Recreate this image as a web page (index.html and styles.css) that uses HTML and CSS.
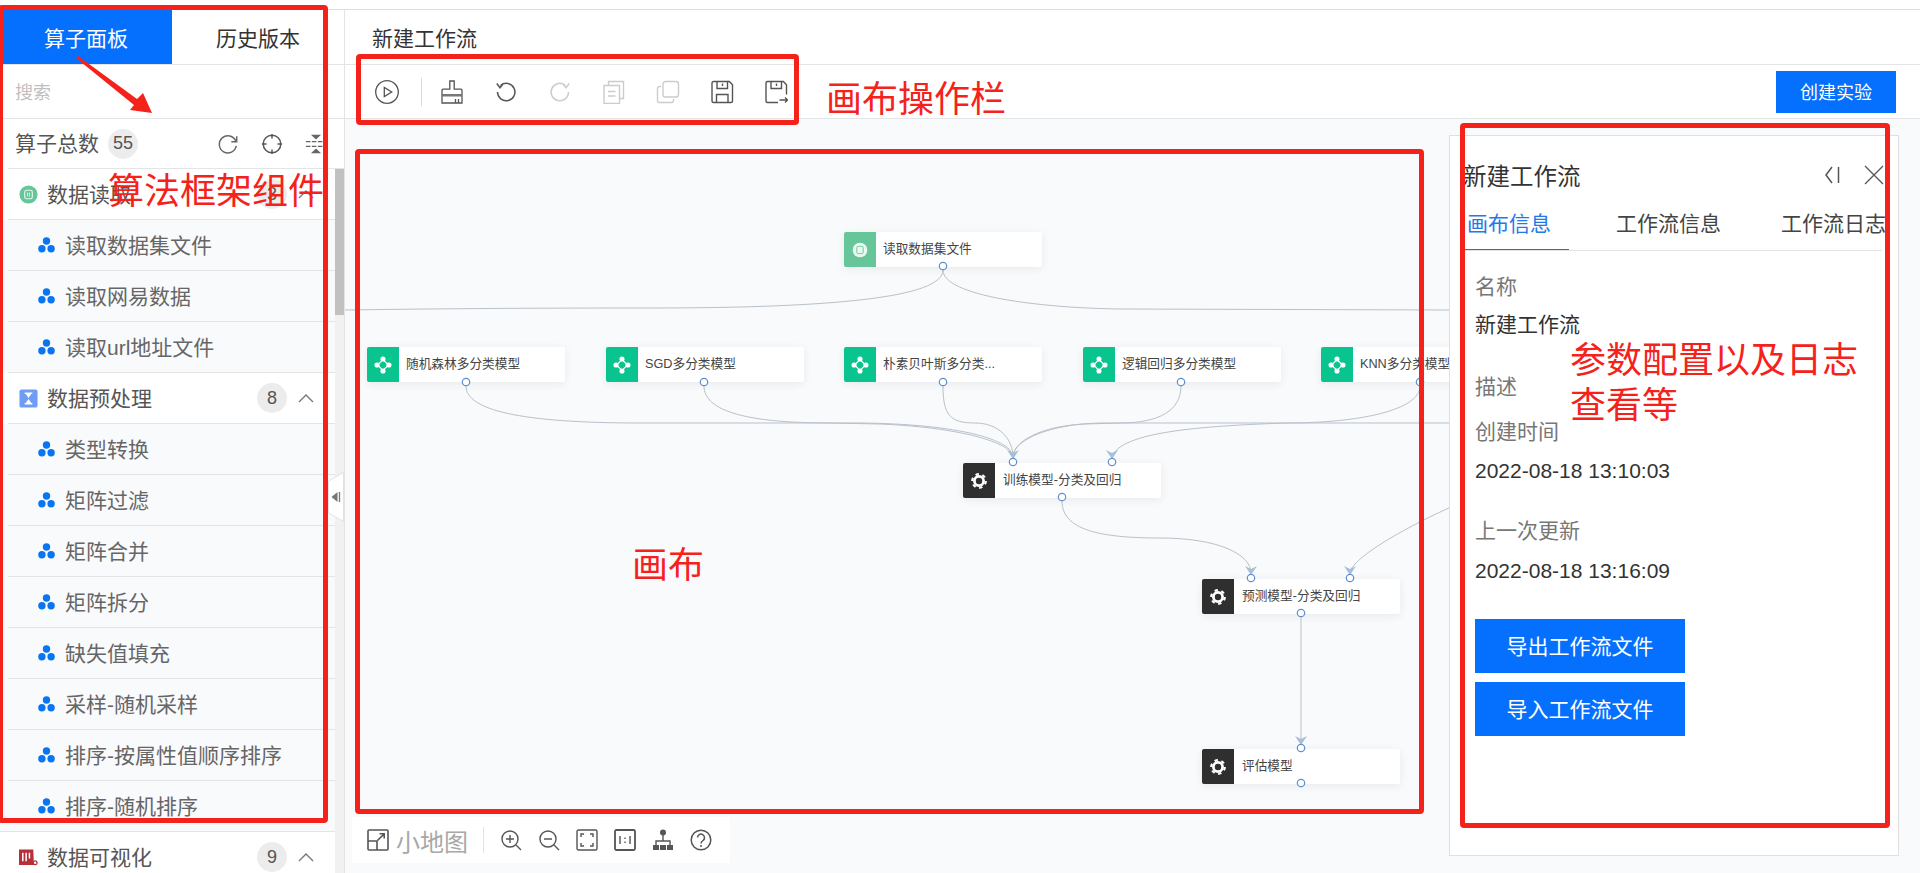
FILE: index.html
```html
<!DOCTYPE html>
<html lang="zh-CN">
<head>
<meta charset="utf-8">
<title>新建工作流</title>
<link rel="stylesheet" href="styles.css">
</head>
<body>
<svg class="defs" width="0" height="0" aria-hidden="true">
  <defs>
    <symbol id="tri" viewBox="0 0 17 16"><circle cx="8.5" cy="4" r="3.7"/><circle cx="3.9" cy="11.7" r="3.7"/><circle cx="13.1" cy="11.7" r="3.7"/></symbol>
    <symbol id="chev" viewBox="0 0 16 10"><path d="M1 9 8 2l7 7" fill="none" stroke="#777" stroke-width="1.4"/></symbol>
    <symbol id="gear" viewBox="0 0 24 24"><circle cx="12" cy="12" r="5" fill="none" stroke="#fff" stroke-width="3"/><circle cx="12" cy="12" r="7.4" fill="none" stroke="#fff" stroke-width="2.4" stroke-dasharray="3.7 4"/></symbol>
    <symbol id="model" viewBox="0 0 24 24"><path d="M12 6 18 12 12 18 6 12Z" fill="none" stroke="#fff" stroke-width="1.2"/><circle cx="12" cy="5.5" r="2.8" fill="#fff"/><circle cx="12" cy="18.5" r="2.8" fill="#fff"/><circle cx="5.5" cy="12" r="2.8" fill="#fff"/><circle cx="18.5" cy="12" r="2.8" fill="#fff"/></symbol>
  </defs>
</svg>
<div class="topline"></div>
<div class="app">
  <aside class="sidebar">
    <div class="side-tabs">
      <div class="side-tab active">算子面板</div>
      <div class="side-tab">历史版本</div>
    </div>
    <div class="search">搜索</div>
    <div class="count-row">
      <span class="count-label">算子总数</span>
      <span class="badge">55</span>
      <span class="count-tools">
        <svg class="tool" viewBox="0 0 24 24"><path d="M20.5 9A9.3 9.3 0 1 0 21 14" fill="none" stroke="#666" stroke-width="1.6"/><path d="M21.5 3.5V9.6H15.6" fill="none" stroke="#666" stroke-width="1.6"/></svg>
        <svg class="tool" viewBox="0 0 24 24"><circle cx="12" cy="12" r="9.6" fill="none" stroke="#555" stroke-width="1.6"/><path d="M12 1v5M12 18v5M1 12h5M18 12h5" stroke="#555" stroke-width="1.6"/></svg>
        <svg class="tool" viewBox="0 0 24 24"><path d="M1 9.5h22M1 14.5h22" stroke="#666" stroke-width="1.4" stroke-dasharray="5 1.500"/><path d="M6.500 2h11l-5.500 5ZM6.500 22h11l-5.500-5Z" fill="#666"/></svg>
      </span>
    </div>
    <div class="tree">
      <div class="tree-list">
        <div class="row group"><div class="row-in">
          <svg class="g-icon" viewBox="0 0 20 20"><circle cx="10" cy="10" r="9.5" fill="#66c699"/><rect x="6" y="5.5" width="8" height="9" rx="2" fill="none" stroke="#e8f7ef" stroke-width="1.2"/><path d="M9 8v4M11 8v4" stroke="#e8f7ef"/></svg>
          <span class="g-text">数据读取</span><span class="badge push">3</span>
          <svg class="chev" viewBox="0 0 16 10"><use href="#chev"/></svg>
        </div></div>
        <div class="row item"><div class="row-in"><svg class="i-icon"><use href="#tri"/></svg><span class="i-text">读取数据集文件</span></div></div>
        <div class="row item"><div class="row-in"><svg class="i-icon"><use href="#tri"/></svg><span class="i-text">读取网易数据</span></div></div>
        <div class="row item"><div class="row-in"><svg class="i-icon"><use href="#tri"/></svg><span class="i-text">读取url地址文件</span></div></div>
        <div class="row group"><div class="row-in">
          <svg class="g-icon" viewBox="0 0 20 20"><rect width="19" height="19" x=".5" y=".5" rx="2" fill="#6f9cf5"/><path d="M6 4.500h8M6 15.500h8" fill="none" stroke="#fff" stroke-width="1.500"/><path d="M7 5h6l-3 4.500ZM6.800 15h6.400L10 10.500Z" fill="#fff"/></svg>
          <span class="g-text">数据预处理</span><span class="badge push">8</span>
          <svg class="chev" viewBox="0 0 16 10"><use href="#chev"/></svg>
        </div></div>
        <div class="row item"><div class="row-in"><svg class="i-icon"><use href="#tri"/></svg><span class="i-text">类型转换</span></div></div>
        <div class="row item"><div class="row-in"><svg class="i-icon"><use href="#tri"/></svg><span class="i-text">矩阵过滤</span></div></div>
        <div class="row item"><div class="row-in"><svg class="i-icon"><use href="#tri"/></svg><span class="i-text">矩阵合并</span></div></div>
        <div class="row item"><div class="row-in"><svg class="i-icon"><use href="#tri"/></svg><span class="i-text">矩阵拆分</span></div></div>
        <div class="row item"><div class="row-in"><svg class="i-icon"><use href="#tri"/></svg><span class="i-text">缺失值填充</span></div></div>
        <div class="row item"><div class="row-in"><svg class="i-icon"><use href="#tri"/></svg><span class="i-text">采样-随机采样</span></div></div>
        <div class="row item"><div class="row-in"><svg class="i-icon"><use href="#tri"/></svg><span class="i-text">排序-按属性值顺序排序</span></div></div>
        <div class="row item"><div class="row-in"><svg class="i-icon"><use href="#tri"/></svg><span class="i-text">排序-随机排序</span></div></div>
        <div class="row group footer-group"><div class="row-in">
          <svg class="g-icon" viewBox="0 0 20 20"><path d="M0 1.500h15l.5 11.500a3.500 3.500 0 0 0 2 5H0Z" fill="#b5303a"/><path d="M4 5v9M7.500 5v9M11 5v6" stroke="#fff" stroke-width="1.600"/><circle cx="17" cy="15.500" r="2" fill="none" stroke="#b5303a" stroke-width="1.300"/></svg>
          <span class="g-text">数据可视化</span><span class="badge push">9</span>
          <svg class="chev" viewBox="0 0 16 10"><use href="#chev"/></svg>
        </div></div>
      </div>
      <div class="track"><div class="thumb"></div></div>
    </div>
    <svg class="handle" viewBox="0 0 16 50"><path d="M15.500 .5V49.500L.5 41V9Z" fill="#fff" stroke="#dfe2e6"/><path d="M9.500 20v10L3.500 25Z" fill="#777"/><path d="M11.500 20v10" stroke="#777" stroke-width="1.300"/></svg>
  </aside>

  <main class="main">
    <div class="title-row">新建工作流</div>
    <div class="toolbar">
      <svg class="tb" viewBox="0 0 24 24"><circle cx="12" cy="12" r="11.300" fill="none" stroke="#555" stroke-width="1.300"/><path d="M9.300 7.500v9l7.400-4.500Z" fill="none" stroke="#555" stroke-width="1.300"/></svg>
      <span class="tb-sep"></span>
      <svg class="tb" viewBox="0 0 24 24"><path d="M9.800 1h4.400v8.200H21a1 1 0 0 1 1 1V23H2V10.200a1 1 0 0 1 1-1H9.800Z" fill="none" stroke="#555" stroke-width="1.300"/><path d="M2 14h20v2.500H2Z" fill="#777"/><path d="M15.500 19v4M18.500 19v4" stroke="#555" stroke-width="1.300"/></svg>
      <svg class="tb" viewBox="0 0 24 24"><path d="M6.500 5.500A8.700 8.700 0 1 1 3.500 12" fill="none" stroke="#555" stroke-width="1.500"/><path d="M2.800 3.500 6 7.800l2.800-3.500" fill="none" stroke="#555" stroke-width="1.500"/></svg>
      <svg class="tb" viewBox="0 0 24 24"><path d="M17.500 5.500A8.700 8.700 0 1 0 20.500 12" fill="none" stroke="#ccc" stroke-width="1.500"/><path d="M21.200 3.500 18 7.800l-2.800-3.500" fill="none" stroke="#ccc" stroke-width="1.500"/></svg>
      <svg class="tb" viewBox="0 0 24 24"><path d="M6.500 5.500V1.500h15v17h-4" fill="none" stroke="#ccc" stroke-width="1.400"/><path d="M2 5.500h15.500v18H2Z" fill="none" stroke="#ccc" stroke-width="1.400"/><path d="M6 11.500h7.500M6 16h7.500" stroke="#ccc" stroke-width="1.400"/></svg>
      <svg class="tb" viewBox="0 0 24 24"><rect x="7" y="1.500" width="15.500" height="15.500" rx="2.500" fill="none" stroke="#ccc" stroke-width="1.400"/><path d="M5 6.500H3.500a2 2 0 0 0-2 2v12a2 2 0 0 0 2 2h12a2 2 0 0 0 2-2V19" fill="none" stroke="#ccc" stroke-width="1.400"/></svg>
      <svg class="tb" viewBox="0 0 24 24"><path d="M3.500 1.500h15.800l3.200 3.200v16.300a1.500 1.500 0 0 1-1.500 1.500H3.500A1.500 1.500 0 0 1 2 21V3a1.500 1.500 0 0 1 1.500-1.500Z" fill="none" stroke="#555" stroke-width="1.400"/><path d="M7 1.500v7h10.500v-7M6.500 22.500v-8h11.500v8" fill="none" stroke="#555" stroke-width="1.400"/><path d="M12.500 3.500v2.500" stroke="#555" stroke-width="1.400"/></svg>
      <svg class="tb" viewBox="0 0 24 24"><path d="M22.500 14.500V4.700L19.300 1.500H3.500A1.500 1.500 0 0 0 2 3v18a1.500 1.500 0 0 0 1.500 1.500H14" fill="none" stroke="#555" stroke-width="1.400"/><path d="M7 1.500v7h10.500v-7" fill="none" stroke="#555" stroke-width="1.400"/><path d="M12.500 3.500v2.500" stroke="#555" stroke-width="1.400"/><path d="M15.500 20h8M21 17.500l2.500 2.500-2.500 2.500" fill="none" stroke="#555" stroke-width="1.300"/></svg>
      <button class="btn create">创建实验</button>
    </div>

    <section class="canvas">
      <div class="node n-read"><span class="node-icon ic-read"><svg class="node-svg" viewBox="0 0 24 24"><circle cx="12" cy="12" r="8" fill="#e9f8f0"/><rect x="8.500" y="8" width="7" height="8" rx="1.500" fill="none" stroke="#66c699"/></svg></span><span class="node-text">读取数据集文件</span></div>
      <div class="node n-m1"><span class="node-icon ic-model"><svg class="node-svg"><use href="#model"/></svg></span><span class="node-text">随机森林多分类模型</span></div>
      <div class="node n-m2"><span class="node-icon ic-model"><svg class="node-svg"><use href="#model"/></svg></span><span class="node-text">SGD多分类模型</span></div>
      <div class="node n-m3"><span class="node-icon ic-model"><svg class="node-svg"><use href="#model"/></svg></span><span class="node-text">朴素贝叶斯多分类...</span></div>
      <div class="node n-m4"><span class="node-icon ic-model"><svg class="node-svg"><use href="#model"/></svg></span><span class="node-text">逻辑回归多分类模型</span></div>
      <div class="node n-m5"><span class="node-icon ic-model"><svg class="node-svg"><use href="#model"/></svg></span><span class="node-text">KNN多分类模型</span></div>
      <div class="node n-train"><span class="node-icon ic-dark"><svg class="node-svg"><use href="#gear"/></svg></span><span class="node-text">训练模型-分类及回归</span></div>
      <div class="node n-pred"><span class="node-icon ic-dark"><svg class="node-svg"><use href="#gear"/></svg></span><span class="node-text">预测模型-分类及回归</span></div>
      <div class="node n-eval"><span class="node-icon ic-dark"><svg class="node-svg"><use href="#gear"/></svg></span><span class="node-text">评估模型</span></div>

      <svg class="edges" viewBox="345 119 1575 754">
        <g class="wires">
          <path d="M943 270C943 298 830 308 650 308C500 308 420 309 345 310"/>
          <path d="M943 270C943 296 1040 308 1120 309L1449 310"/>
          <path d="M466 386C466 410 520 423 640 423L860 423C960 424 1013 440 1013 457"/>
          <path d="M704 386C704 412 750 423 830 423L880 424C970 428 1013 445 1013 457"/>
          <path d="M943 386C943 415 950 423 975 423C1000 423 1013 440 1013 457"/>
          <path d="M1181 386C1181 410 1160 423 1120 423L1085 424C1040 426 1013 442 1013 457"/>
          <path d="M1449 423L1100 423C1050 424 1013 440 1013 457"/>
          <path d="M1420 386C1420 410 1360 423 1286 423C1200 426 1120 432 1112 457"/>
          <path d="M1062 501C1062 530 1100 538 1160 538C1220 538 1251 555 1251 573"/>
          <path d="M1449 508C1400 530 1350 560 1350 573"/>
          <path d="M1301 617V743"/>
        </g>
        <g class="arrows">
          <path d="M1007 450 1013 459 1019 450 1013 453Z"/>
          <path d="M1106 450 1112 459 1118 450 1112 453Z"/>
          <path d="M1245 566 1251 575 1257 566 1251 569Z"/>
          <path d="M1344 566 1350 575 1356 566 1350 569Z"/>
          <path d="M1295 736 1301 745 1307 736 1301 739Z"/>
        </g>
        <g class="ports">
          <circle cx="943" cy="266" r="3.700"/>
          <circle cx="466" cy="382" r="3.700"/><circle cx="704" cy="382" r="3.700"/><circle cx="943" cy="382" r="3.700"/><circle cx="1181" cy="382" r="3.700"/><circle cx="1420" cy="382" r="3.700"/>
          <circle cx="1013" cy="462" r="3.700"/><circle cx="1112" cy="462" r="3.700"/><circle cx="1062" cy="497" r="3.700"/>
          <circle cx="1251" cy="578" r="3.700"/><circle cx="1350" cy="578" r="3.700"/><circle cx="1301" cy="613" r="3.700"/>
          <circle cx="1301" cy="748" r="3.700"/><circle cx="1301" cy="783" r="3.700"/>
        </g>
      </svg>

      <div class="mini-bar">
        <svg class="mb-ic" viewBox="0 0 22 22"><rect x="1" y="1" width="20" height="20" rx="1" fill="none" stroke="#555" stroke-width="1.600"/><path d="M1 12h9v9" fill="none" stroke="#555" stroke-width="1.600"/><path d="M10.500 11.500 17 5M12.500 4.800H17.200V9.500" fill="none" stroke="#555" stroke-width="1.600"/></svg>
        <span class="mini-label">小地图</span>
        <span class="mb-sep"></span>
        <svg class="mb-ic" viewBox="0 0 22 22"><circle cx="10" cy="10" r="8" fill="none" stroke="#555" stroke-width="1.400"/><path d="M16 16l5 5M6 10h8M10 6v8" fill="none" stroke="#555" stroke-width="1.400"/></svg>
        <svg class="mb-ic" viewBox="0 0 22 22"><circle cx="10" cy="10" r="8" fill="none" stroke="#555" stroke-width="1.400"/><path d="M16 16l5 5M6 10h8" fill="none" stroke="#555" stroke-width="1.400"/></svg>
        <svg class="mb-ic" viewBox="0 0 22 22"><rect x="1" y="1" width="20" height="20" rx="1.500" fill="none" stroke="#555" stroke-width="1.400"/><path d="M5 8V5h3M14 5h3v3M17 14v3h-3M8 17H5v-3" fill="none" stroke="#555" stroke-width="1.400"/></svg>
        <svg class="mb-ic" viewBox="0 0 22 22"><rect x="1" y="1" width="20" height="20" rx="1.500" fill="none" stroke="#555" stroke-width="1.800"/><path d="M6 7v8M16 7v8M11 8.500v1.500M11 12.500v1.500" stroke="#555" stroke-width="1.400"/></svg>
        <svg class="mb-ic" viewBox="0 0 22 22"><circle cx="11" cy="3.500" r="3" fill="#555"/><path d="M11 6v6M4 16v-4h14v4" fill="none" stroke="#555" stroke-width="1.400"/><path d="M1 16h6v5H1ZM8 16h6v5H8ZM15 16h6v5h-6Z" fill="#555"/></svg>
        <svg class="mb-ic" viewBox="0 0 22 22"><circle cx="11" cy="11" r="9.800" fill="none" stroke="#555" stroke-width="1.500"/><path d="M7.500 8.500a3.500 3.500 0 1 1 5.500 3c-1.300.9-2 1.500-2 3" fill="none" stroke="#555" stroke-width="1.500"/><circle cx="11" cy="17" r="1" fill="#555"/></svg>
      </div>

      <aside class="panel">
        <div class="panel-head">
          <span class="panel-title">新建工作流</span>
          <svg class="p-ic" viewBox="0 0 20 20"><path d="M8 2 2 10l6 8M14.500 2v16" fill="none" stroke="#555" stroke-width="1.500"/></svg>
          <svg class="p-ic" viewBox="0 0 20 20"><path d="M1 1l18 18M19 1 1 19" fill="none" stroke="#555" stroke-width="1.300"/></svg>
        </div>
        <div class="panel-tabs">
          <span class="p-tab active">画布信息</span>
          <span class="p-tab">工作流信息</span>
          <span class="p-tab">工作流日志</span>
        </div>
        <div class="panel-body">
          <div class="f-label">名称</div>
          <div class="f-value f-name">新建工作流</div>
          <div class="f-label f-desc">描述</div>
          <div class="f-label f-created">创建时间</div>
          <div class="f-value">2022-08-18 13:10:03</div>
          <div class="f-label f-updated">上一次更新</div>
          <div class="f-value f-last">2022-08-18 13:16:09</div>
          <button class="btn wide first">导出工作流文件</button>
          <button class="btn wide">导入工作流文件</button>
        </div>
      </aside>
    </section>
  </main>
</div>

<div class="mark box-side"></div>
<div class="mark box-tool"></div>
<div class="mark box-canvas"></div>
<div class="mark box-panel"></div>
<svg class="mark-arrow" viewBox="0 0 90 70"><path d="M1 3 3 1 62 44 68 38 77 58 55 55 59 50Z" fill="#f5221b"/></svg>
<div class="note note-side">算法框架组件</div>
<div class="note note-tool">画布操作栏</div>
<div class="note note-canvas">画布</div>
<div class="note note-panel">参数配置以及日志<br>查看等</div>
</body>
</html>
```

FILE: styles.css
```css
* { box-sizing: border-box; }
html, body { margin: 0; height: 100%; overflow: hidden; }
body {
  position: relative;
  background: #fff;
  color: #333;
  font-family: "Liberation Sans", "Noto Sans CJK SC", sans-serif;
  font-size: 21px;
}
.defs { position: absolute; }
.topline { height: 10px; border-bottom: 1px solid #dcdcdc; background: #fff; }
.app { display: flex; height: 863px; }

/* sidebar */
.sidebar { position: relative; width: 344px; flex: none; display: flex; flex-direction: column; background: #fff; }
.side-tabs { display: flex; height: 55px; border-bottom: 1px solid #e4e4e4; flex: none; }
.side-tab { width: 172px; display: flex; align-items: center; justify-content: center; color: #333; }
.side-tab.active { background: #0570fd; color: #fff; }
.search { height: 54px; flex: none; padding-left: 15px; padding-bottom: 2px; display: flex; align-items: center; color: #bfbfbf; font-size: 18px; border-bottom: 1px solid #e4e4e4; }
.count-row { height: 50px; flex: none; margin-left: 8px; padding-left: 7px; display: flex; align-items: center; border-bottom: 1px solid #e4e4e4; color: #555; }
.count-label { margin-right: 9px; padding-bottom: 3px; }
.badge { width: 30px; height: 30px; border-radius: 50%; background: #ececec; color: #555; font-size: 18px; display: flex; align-items: center; justify-content: center; flex: none; }
.count-tools { margin-left: 79px; display: flex; gap: 22px; flex: none; }
.tool { width: 22px; height: 22px; flex: none; }
.tree { flex: 1; min-height: 0; display: flex; overflow: hidden; }
.tree-list { width: 335px; flex: none; }
.track { width: 9px; flex: none; background: #f1f1f1; }
.thumb { height: 146px; background: #c1c1c1; }
.row { height: 51px; }
.row-in { height: 51px; margin-left: 8px; display: flex; align-items: center; border-bottom: 1px solid #e4e4e4; }
.group { background: #fff; color: #555; }
.group .row-in { padding-left: 11px; padding-right: 21px; }
.g-text { padding-bottom: 3px; }
.footer-group { box-shadow: 0 -1px 0 #e4e4e4; }
.item { background: #f9fafc; color: #666; }
.item .row-in { padding-left: 30px; gap: 10px; }
.i-text { padding-bottom: 3px; }
.g-icon { width: 19px; height: 19px; margin-right: 9px; flex: none; }
.i-icon { width: 17px; height: 16px; fill: #0a75f0; flex: none; }
.push { margin-left: auto; }
.chev { width: 16px; height: 10px; margin-left: 11px; flex: none; }
.handle { position: absolute; left: 328px; top: 462px; width: 16px; height: 50px; }

/* main */
.main { flex: 1; min-width: 0; display: flex; flex-direction: column; border-left: 1px solid #e4e4e4; }
.title-row { height: 55px; flex: none; padding-left: 27px; display: flex; align-items: center; border-bottom: 1px solid #e4e4e4; color: #333; }
.toolbar { height: 54px; flex: none; padding: 0 24px 0 30px; display: flex; align-items: center; gap: 30px; border-bottom: 1px solid #e4e4e4; }
.tb { width: 24px; height: 24px; flex: none; }
.tb-sep { width: 1px; height: 28px; background: #d9d9d9; margin: 0 -12px 0 -8px; flex: none; }
.btn { border: 0; background: #0570fd; color: #fff; font: inherit; padding: 0; cursor: pointer; }
.create { margin-left: auto; width: 120px; height: 42px; font-size: 18px; padding-bottom: 2px; }

/* canvas */
.canvas { position: relative; flex: 1; min-height: 0; background: #f8fafc; overflow: hidden; }
.node { position: absolute; width: 198px; height: 35px; display: flex; align-items: center; background: #fff; box-shadow: 0 2px 10px rgba(0, 0, 0, .07); border-radius: 2px; font-size: 12.700px; color: #444; }
.node-icon { width: 32px; height: 100%; flex: none; display: flex; align-items: center; justify-content: center; border-radius: 2px 0 0 2px; }
.node-svg { width: 22px; height: 22px; }
.node-text { margin-left: 7px; padding-bottom: 4px; white-space: nowrap; }
.ic-read { background: #66c699; }
.ic-model { background: #0ac48f; }
.ic-dark { background: #2f2f2f; }
.ic-dark + .node-text { margin-left: 8px; }
.n-read { left: 499px; top: 113px; }
.n-m1 { left: 22px; top: 228px; }
.n-m2 { left: 261px; top: 228px; }
.n-m3 { left: 499px; top: 228px; }
.n-m4 { left: 738px; top: 228px; }
.n-m5 { left: 976px; top: 228px; }
.n-train { left: 618px; top: 344px; }
.n-pred { left: 857px; top: 460px; }
.n-eval { left: 857px; top: 630px; }
.edges { position: absolute; left: 0; top: 0; width: 1575px; height: 754px; }
.wires path { fill: none; stroke: #b8c1ca; stroke-width: 1; }
.arrows path { fill: #a9bdd3; }
.ports circle { fill: #fff; stroke: #5f8fd0; stroke-width: 1.200; }

.mini-bar { position: absolute; left: 7px; top: 698px; width: 378px; height: 46px; background: #fff; display: flex; align-items: center; padding-left: 15px; }
.mb-ic { width: 22px; height: 22px; flex: none; margin-right: 16px; }
.mb-ic:first-child { margin-right: 0; }
.mini-label { margin-left: 7px; width: 72px; font-size: 24px; color: #a8a8a8; white-space: nowrap; }
.mb-sep { width: 1px; height: 26px; background: #e3e3e3; margin: 0 16px 0 15px; flex: none; }

/* panel */
.panel { position: absolute; left: 1104px; top: 16px; width: 450px; height: 721px; background: #fff; border: 1px solid #e0e0e0; padding: 0 0 0 15px; }
.panel-head { height: 58px; margin-top: 10px; display: flex; align-items: center; padding-right: 14px; }
.panel-title { font-size: 23.500px; color: #333; margin-right: auto; margin-left: -2px; }
.p-ic { width: 20px; height: 20px; flex: none; margin-left: 20px; }
.panel-tabs { height: 47px; margin-right: 16px; display: flex; align-items: flex-start; padding-top: 5px; border-bottom: 1px solid #e4e4e4; white-space: nowrap; }
.p-tab { position: relative; height: 41px; padding: 0 2px; width: 104px; flex: none; color: #444; line-height: 30px; }
.p-tab + .p-tab { margin-left: 47px; width: 119px; padding: 0; }
.p-tab + .p-tab + .p-tab { margin-left: 46px; }
.p-tab.active { color: #2379e8; border-bottom: 1px solid #1a73e8; }
.panel-body { padding: 0 0 0 10px; }
.f-label { color: #777; line-height: 30px; margin-top: 21px; }
.f-value { color: #333; line-height: 30px; margin-top: 9px; }
.f-name { margin-top: 8px; }
.f-desc { margin-top: 32px; }
.f-created { margin-top: 15px; }
.f-updated { margin-top: 30px; }
.f-last { margin-top: 10px; }
.wide { display: block; width: 210px; height: 54px; font-size: 21px; margin-top: 9px; padding-bottom: 3px; }
.wide.first { margin-top: 33px; }

/* annotations */
.mark { position: absolute; border: 5px solid #f5221b; border-radius: 4px; pointer-events: none; }
.box-side { left: -2px; top: 5px; width: 330px; height: 818px; }
.box-tool { left: 356px; top: 54px; width: 443px; height: 71px; }
.box-canvas { left: 355px; top: 149px; width: 1069px; height: 665px; }
.box-panel { left: 1460px; top: 123px; width: 430px; height: 705px; }
.mark-arrow { position: absolute; left: 75px; top: 55px; width: 90px; height: 70px; }
.note { position: absolute; color: #f5221b; font-size: 36px; line-height: 45px; white-space: nowrap; }
.note-side { left: 108px; top: 169px; }
.note-tool { left: 826px; top: 77px; }
.note-canvas { left: 632px; top: 543px; }
.note-panel { left: 1570px; top: 338px; }
```
